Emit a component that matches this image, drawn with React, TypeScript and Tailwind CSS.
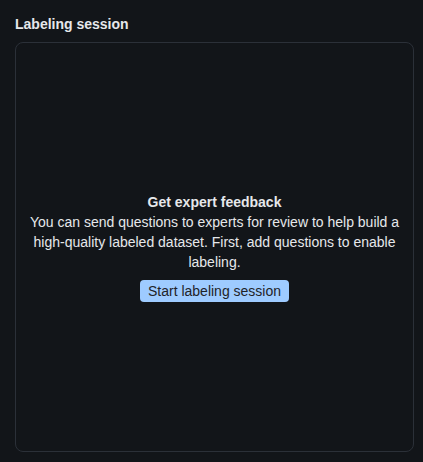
export default function App() {
  return (
    <div className="w-[423px] h-[462px] bg-[#121519] pl-[15px] pr-[9px] pt-[14px] pb-[10px] flex flex-col" style={{ fontFamily: '"Liberation Sans", Arial, sans-serif' }}>
      <h2 className="text-[14px] leading-[20px] font-bold text-[#e6e8eb] mb-[8px]">Labeling session</h2>
      <div className="flex-1 rounded-[8px] border border-[#2b3038] bg-[#121519] flex flex-col items-center justify-center text-center px-[12px]">
        <div className="text-[14px] leading-[20px] font-bold text-[#e6e8eb]">Get expert feedback</div>
        <p className="text-[14px] leading-[20px] text-[#e6e8eb]">
          You can send questions to experts for review to help build a high-quality labeled dataset. First, add questions to enable labeling.
        </p>
        <button className="mt-[8px] h-[22px] px-[8px] rounded-[4px] bg-[#9ecbff] text-[#1f2328] text-[14px] leading-[20px]">Start labeling session</button>
      </div>
    </div>
  );
}
